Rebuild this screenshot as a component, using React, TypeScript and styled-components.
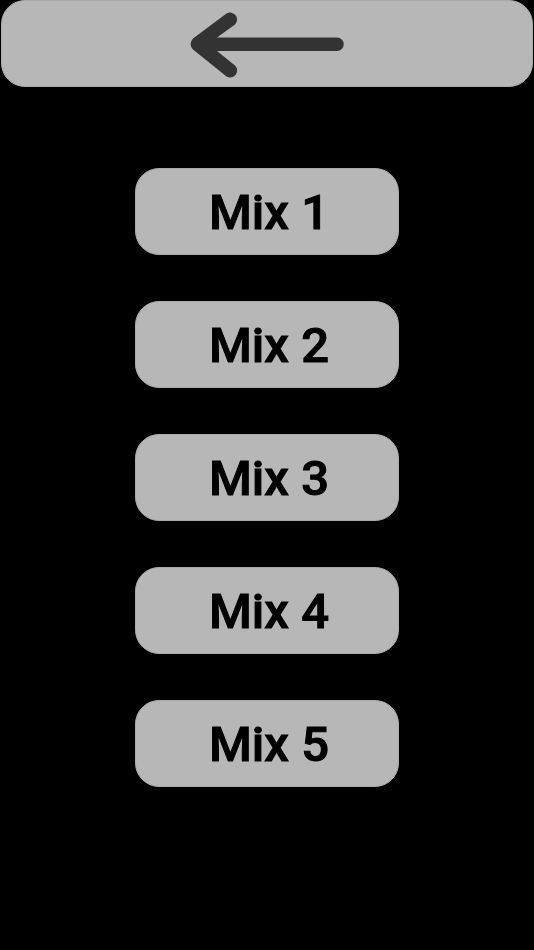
import React from "react";
import styled, { createGlobalStyle } from "styled-components";

const GlobalStyle = createGlobalStyle`
  * { box-sizing: border-box; }
  body { margin: 0; background: #000; }
`;

const Screen = styled.div`
  min-height: 100vh;
  display: flex;
  flex-direction: column;
  gap: 81px;
  background: #000;
`;

const Header = styled.header`
  display: flex;
  padding: 0 1px;
`;

const BackButton = styled.button`
  flex: 1;
  height: 87px;
  display: flex;
  align-items: center;
  justify-content: center;
  padding: 0;
  border: 1px solid #a9aaa9;
  border-radius: 24px;
  background: #b7b7b7;
  cursor: pointer;
`;

const MixList = styled.main`
  display: grid;
  grid-template-columns: minmax(200px, 50%);
  justify-content: center;
  gap: 46px;
  padding: 0 3px 48px;
`;

const MixButton = styled.button`
  padding: 2px 0 0 73px;
  border: 1px solid #a9aaa9;
  border-radius: 24px;
  background: #b7b7b7;
  color: #000;
  font: 500 49px/83px Roboto, "Liberation Sans", sans-serif;
  -webkit-text-stroke: 1px #000;
  text-align: left;
  white-space: nowrap;
  cursor: pointer;
`;

const mixes = [1, 2, 3, 4, 5];

const BackArrow = () => (
  <svg width="154" height="68" viewBox="0 0 154 68" fill="#333" aria-hidden="true">
    <path d="M36.500 3.500A7 7 0 0 1 45 14.500L27 27.500H147A6.500 6.500 0 0 1 147 41H27L45 55.500A7 7 0 0 1 36.500 66.500L3 39.500Q-2 34 3 28.500Z" />
  </svg>
);

export default function App() {
  return (
    <Screen>
      <GlobalStyle />
      <Header>
        <BackButton type="button" aria-label="Back">
          <BackArrow />
        </BackButton>
      </Header>
      <MixList>
        {mixes.map((n) => (
          <MixButton type="button" key={n}>Mix {n}</MixButton>
        ))}
      </MixList>
    </Screen>
  );
}
